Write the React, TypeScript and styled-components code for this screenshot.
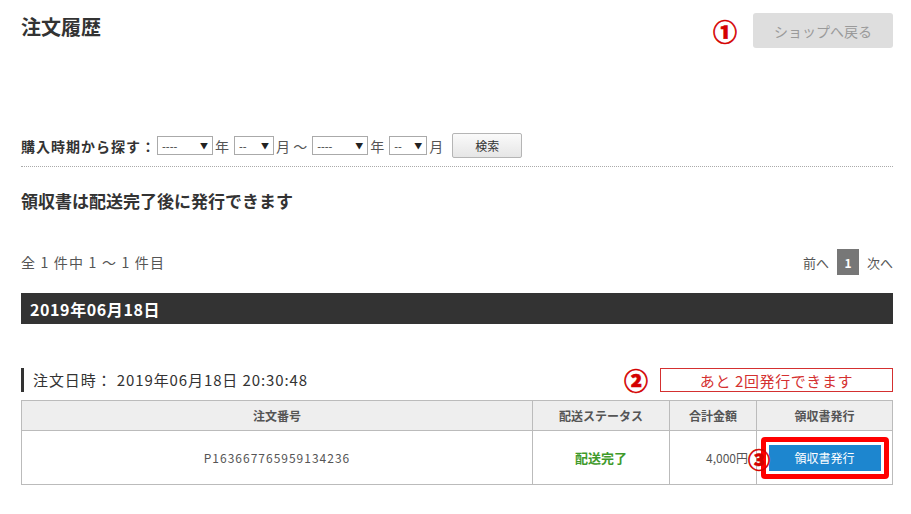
import React from 'react';
import styled, { createGlobalStyle } from 'styled-components';

const FONT = `"Noto Sans CJK JP", "Noto Sans", "Liberation Sans", sans-serif`;

const GlobalStyle = createGlobalStyle`
  body {
    margin: 0;
    background: #fff;
    font-family: ${FONT};
    color: #333;
  }
`;

const Page = styled.div`
  width: 911px;
  padding: 13px 18px 0 21px;
  box-sizing: border-box;
`;

const Header = styled.div`
  display: flex;
  justify-content: space-between;
  align-items: flex-start;
  height: 35px;
`;

const Title = styled.h1`
  margin: 0;
  padding-top: 1px;
  font-size: 20px;
  font-weight: bold;
  color: #333;
  line-height: 26px;
`;

const HeaderRight = styled.div`
  display: flex;
  align-items: center;
  gap: 16px;
`;

const Mark = styled.span<{ $size?: number }>`
  color: #d40000;
  font-weight: 900;
  font-size: ${(p) => p.$size ?? 24}px;
  line-height: 1;
  -webkit-text-stroke: 0.6px #d40000;
`;

const BackButton = styled.button`
  width: 140px;
  height: 35px;
  border: none;
  border-radius: 3px;
  background: #dedede;
  color: #9a9a9a;
  font-family: ${FONT};
  font-size: 14px;
`;

const SearchRow = styled.div`
  display: flex;
  align-items: center;
  margin-top: 85px;
  height: 25px;
  font-size: 14px;
  color: #555;
`;

const SearchLabel = styled.span`
  font-weight: bold;
  color: #333;
  letter-spacing: 1px;
  margin-right: 1px;
`;

const FakeSelect = styled.span<{ $w: number }>`
  display: inline-flex;
  align-items: center;
  justify-content: space-between;
  box-sizing: border-box;
  width: ${(p) => p.$w}px;
  height: 19px;
  border: 1px solid #aaa;
  padding: 0 4px;
  font-size: 11px;
  color: #333;
  background: #fff;
  margin-right: 2px;
`;

const Arrow = styled.span`
  font-size: 8px;
  color: #222;
`;

const Unit = styled.span<{ $gap?: number }>`
  margin-right: ${(p) => p.$gap ?? 5}px;
`;

const SearchButton = styled.button`
  margin-left: 9px;
  width: 70px;
  height: 25px;
  border: 1px solid #b5b5b5;
  border-radius: 2px;
  background: linear-gradient(#fafafa, #e6e6e6);
  font-family: ${FONT};
  font-size: 12px;
  color: #333;
`;

const Divider = styled.hr`
  margin: 8px 0 0;
  border: none;
  border-top: 1px dotted #aaa;
`;

const Notice = styled.p`
  margin: 22px 0 0;
  font-size: 17px;
  font-weight: bold;
  color: #333;
  line-height: 24px;
`;

const CountRow = styled.div`
  display: flex;
  justify-content: space-between;
  align-items: center;
  margin-top: 36px;
  height: 26px;
`;

const Count = styled.span`
  font-size: 14px;
  color: #555;
  letter-spacing: 1.2px;
`;

const Pager = styled.div`
  display: flex;
  align-items: center;
  gap: 8px;
  font-size: 13px;
  color: #555;
`;

const PageBox = styled.span`
  display: inline-flex;
  align-items: center;
  justify-content: center;
  width: 22px;
  height: 26px;
  background: #777;
  color: #fff;
  font-weight: bold;
  font-size: 12px;
`;

const DateBar = styled.div`
  margin-top: 18px;
  height: 31px;
  background: #333;
  color: #fff;
  font-size: 16px;
  font-weight: bold;
  letter-spacing: 0.6px;
  display: flex;
  align-items: center;
  padding-left: 9px;
`;

const OrderInfoRow = styled.div`
  display: flex;
  justify-content: space-between;
  align-items: center;
  margin-top: 44px;
  height: 24px;
`;

const OrderDate = styled.div`
  border-left: 3px solid #333;
  padding-left: 9px;
  font-size: 15px;
  letter-spacing: 0.9px;
  color: #333;
  line-height: 24px;
`;

const Remaining = styled.div`
  display: flex;
  align-items: center;
  gap: 12px;
`;

const RemainingBox = styled.div`
  box-sizing: border-box;
  width: 233px;
  height: 24px;
  border: 1px solid #d43030;
  color: #d43030;
  font-size: 15px;
  letter-spacing: 0.6px;
  display: flex;
  align-items: center;
  justify-content: center;
`;

const Table = styled.table`
  margin-top: 8px;
  width: 100%;
  border-collapse: collapse;
  table-layout: fixed;
`;

const Th = styled.th<{ $w?: number }>`
  width: ${(p) => (p.$w ? `${p.$w}px` : 'auto')};
  height: 29px;
  background: #eee;
  border: 1px solid #bbb;
  font-size: 12px;
  font-weight: bold;
  color: #555;
  padding: 0;
`;

const Td = styled.td<{ $align?: string }>`
  height: 53px;
  border: 1px solid #bbb;
  font-size: 12px;
  color: #555;
  text-align: ${(p) => p.$align ?? 'center'};
  padding: 0 8px;
  position: relative;
`;

const OrderNo = styled(Td)`
  letter-spacing: 1px;
`;

const Status = styled.span`
  color: #3f9a2a;
  font-weight: bold;
  font-size: 13px;
`;

const Highlight = styled.div`
  display: inline-block;
  border: 5px solid #f00;
  border-radius: 4px;
  padding: 3px 3px;
`;

const IssueButton = styled.button`
  display: block;
  width: 112px;
  height: 26px;
  border: none;
  background: #1d86cf;
  color: #fff;
  font-family: ${FONT};
  font-size: 12px;
`;

const OverlayMark = styled(Mark)`
  position: absolute;
  left: -9px;
  top: 50%;
  transform: translateY(-50%);
  font-size: 22px;
`;

const IssueCell = styled(Td)`
  padding: 0;
`;

export default function App() {
  return (
    <Page>
      <GlobalStyle />
      <Header>
        <Title>注文履歴</Title>
        <HeaderRight>
          <Mark>①</Mark>
          <BackButton>ショップへ戻る</BackButton>
        </HeaderRight>
      </Header>

      <SearchRow>
        <SearchLabel>購入時期から探す：</SearchLabel>
        <FakeSelect $w={56}>
          ----<Arrow>▼</Arrow>
        </FakeSelect>
        <Unit>年</Unit>
        <FakeSelect $w={40}>
          --<Arrow>▼</Arrow>
        </FakeSelect>
        <Unit $gap={5}>月 ～</Unit>
        <FakeSelect $w={56}>
          ----<Arrow>▼</Arrow>
        </FakeSelect>
        <Unit>年</Unit>
        <FakeSelect $w={38}>
          --<Arrow>▼</Arrow>
        </FakeSelect>
        <span>月</span>
        <SearchButton>検索</SearchButton>
      </SearchRow>
      <Divider />

      <Notice>領収書は配送完了後に発行できます</Notice>

      <CountRow>
        <Count>全 1 件中 1 ～ 1 件目</Count>
        <Pager>
          <span>前へ</span>
          <PageBox>1</PageBox>
          <span>次へ</span>
        </Pager>
      </CountRow>

      <DateBar>2019年06月18日</DateBar>

      <OrderInfoRow>
        <OrderDate>注文日時： 2019年06月18日 20:30:48</OrderDate>
        <Remaining>
          <Mark>②</Mark>
          <RemainingBox>あと 2回発行できます</RemainingBox>
        </Remaining>
      </OrderInfoRow>

      <Table>
        <thead>
          <tr>
            <Th>注文番号</Th>
            <Th $w={136}>配送ステータス</Th>
            <Th $w={86}>合計金額</Th>
            <Th $w={135}>領収書発行</Th>
          </tr>
        </thead>
        <tbody>
          <tr>
            <OrderNo>P163667765959134236</OrderNo>
            <Td>
              <Status>配送完了</Status>
            </Td>
            <Td $align="right">4,000円</Td>
            <IssueCell>
              <OverlayMark>③</OverlayMark>
              <Highlight>
                <IssueButton>領収書発行</IssueButton>
              </Highlight>
            </IssueCell>
          </tr>
        </tbody>
      </Table>
    </Page>
  );
}
